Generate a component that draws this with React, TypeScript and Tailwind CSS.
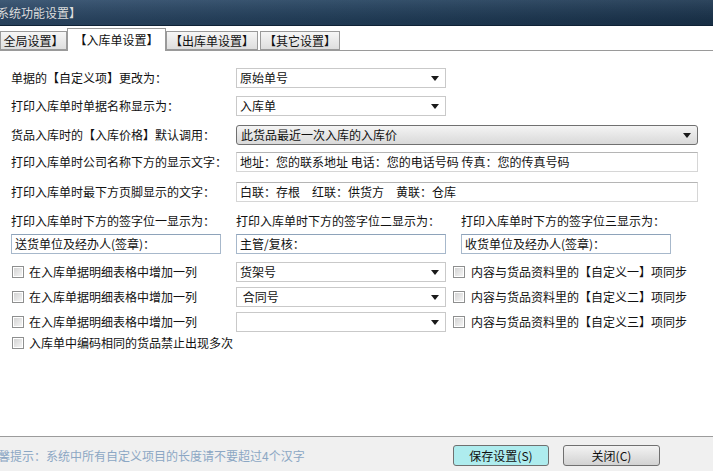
import React from 'react';

const font = { fontFamily: '"Noto Sans CJK SC", "Liberation Sans", sans-serif' };

function Arrow() {
    return (
        <svg width="8" height="5" viewBox="0 0 8 5" className="shrink-0">
            <path d="M0 0 L8 0 L4 5 Z" fill="#1a1a1a" />
        </svg>
    );
}

function Combo({ value, wide }: { value: string; wide?: boolean }) {
    return (
        <div
            className={`h-[20px] ${wide ? 'w-[462px]' : 'w-[210px]'} flex items-center justify-between bg-white border border-[#c9c9c9] pl-[3px] pr-[6px]`}
        >
            <span className="whitespace-pre">{value}</span>
            <Arrow />
        </div>
    );
}

function Field({ value, w = 'w-[462px]', blue }: { value: string; w?: string; blue?: boolean }) {
    return (
        <div
            className={`h-[20px] ${w} flex items-center bg-white border ${
                blue ? 'border-[#a7b8cb] border-t-[#8ea3ba]' : 'border-[#d6d6d6] border-t-[#b5b5b5]'
            } pl-[3px] whitespace-pre`}
        >
            {value}
        </div>
    );
}

function Check() {
    return (
        <div className="w-[12px] h-[12px] shrink-0 border border-[#8e8f8f] bg-white p-px">
            <div className="w-full h-full bg-gradient-to-br from-[#d4d4d4] to-[#f4f4f4]" />
        </div>
    );
}

function Tab({ label, active, w }: { label: string; active?: boolean; w: string }) {
    if (active) {
        return (
            <div
                className={`${w} h-[23px] flex items-center justify-center bg-white border border-b-0 border-[#9a9a9a] -mb-px relative`}
            >
                {label}
            </div>
        );
    }
    return (
        <div
            className={`${w} h-[19px] flex items-center justify-center border border-[#9a9a9a] bg-gradient-to-b from-[#f6f6f6] to-[#dedede]`}
        >
            {label}
        </div>
    );
}

export default function App() {
    const sigLabels = ['打印入库单时下方的签字位一显示为：', '打印入库单时下方的签字位二显示为：', '打印入库单时下方的签字位三显示为：'];
    const extra = [
        { v: '货架号', n: '一' },
        { v: ' 合同号', n: '二' },
        { v: '', n: '三' },
    ];

    return (
        <div className="w-[713px] h-[471px] flex flex-col overflow-hidden bg-white text-[12px] text-[#111] leading-none" style={font}>
            {/* title bar */}
            <div className="h-[26px] shrink-0 flex items-center bg-gradient-to-r from-[#2f4c6b] via-[#24425f] to-[#1c3650] border-b border-[#0f2236]">
                <div className="h-full w-full flex items-center bg-gradient-to-b from-[#ffffff14] to-[#00000026]">
                    <span className="-ml-[3px] text-[12px] text-[#dcdcdc]">系统功能设置】</span>
                </div>
            </div>

            {/* tabs */}
            <div className="h-[25px] shrink-0 flex items-end border-b border-[#9a9a9a] bg-white">
                <Tab label="全局设置】" w="w-[67px]" />
                <Tab label="【入库单设置】" w="w-[99px]" active />
                <Tab label="【出库单设置】" w="w-[92px]" />
                <div className="w-[2px]" />
                <Tab label="【其它设置】" w="w-[80px]" />
            </div>

            {/* content */}
            <div className="flex-1 flex flex-col pl-[11px] pt-[17px]">
                <div className="h-[20px] flex items-center">
                    <span className="w-[225px]">单据的【自定义项】更改为：</span>
                    <Combo value="原始单号" />
                </div>
                <div className="h-[20px] mt-[8px] flex items-center">
                    <span className="w-[225px]">打印入库单时单据名称显示为：</span>
                    <Combo value="入库单" />
                </div>
                <div className="h-[20px] mt-[9px] flex items-center">
                    <span className="w-[225px]">货品入库时的【入库价格】默认调用：</span>
                    <div className="h-[20px] w-[462px] flex items-center justify-between rounded-[3px] border border-[#707070] bg-gradient-to-b from-[#f4f4f4] to-[#d9d9d9] pl-[4px] pr-[6px]">
                        <span>此货品最近一次入库的入库价</span>
                        <Arrow />
                    </div>
                </div>
                <div className="h-[20px] mt-[7px] flex items-center">
                    <span className="w-[225px]">打印入库单时公司名称下方的显示文字：</span>
                    <Field value="地址：您的联系地址 电话：您的电话号码 传真：您的传真号码" />
                </div>
                <div className="h-[21px] mt-[9px] flex items-center">
                    <span className="w-[225px]">打印入库单时最下方页脚显示的文字：</span>
                    <Field value="白联：存根　红联：供货方　黄联：仓库" />
                </div>

                <div className="h-[20px] mt-[9px] flex items-center">
                    {sigLabels.map((l) => (
                        <span key={l} className="w-[225px]">
                            {l}
                        </span>
                    ))}
                </div>
                <div className="h-[20px] mt-[3px] flex items-center gap-[15px]">
                    <Field value="送货单位及经办人(签章)：" w="w-[210px]" blue />
                    <Field value="主管/复核：" w="w-[210px]" blue />
                    <Field value="收货单位及经办人(签章)：" w="w-[210px]" blue />
                </div>

                {extra.map((e, i) => (
                    <div key={e.n} className={`h-[20px] ${i === 0 ? 'mt-[8px]' : 'mt-[5px]'} flex items-center`}>
                        <div className="w-[225px] flex items-center gap-[5px] pl-px">
                            <Check />
                            <span>在入库单据明细表格中增加一列</span>
                        </div>
                        <Combo value={e.v} />
                        <div className="flex items-center gap-[6px] ml-[7px]">
                            <Check />
                            <span>内容与货品资料里的【自定义{e.n}】项同步</span>
                        </div>
                    </div>
                ))}

                <div className="h-[20px] mt-px flex items-center gap-[5px] pl-px">
                    <Check />
                    <span>入库单中编码相同的货品禁止出现多次</span>
                </div>
            </div>

            {/* footer */}
            <div className="h-[35px] shrink-0 flex items-center pt-[3px] border-t border-[#9c9c9c] bg-[#f0f0f0]">
                <span className="-ml-[2px] w-[455px] text-[#8ca7c4]">馨提示：系统中所有自定义项目的长度请不要超过4个汉字</span>
                <button className="w-[96px] h-[21px] flex items-center justify-center rounded-[3px] border border-[#707070] bg-[#aeecee]">
                    保存设置(S)
                </button>
                <button className="ml-[14px] w-[97px] h-[21px] flex items-center justify-center rounded-[3px] border border-[#707070] bg-gradient-to-b from-[#f3f3f3] to-[#d2d2d2]">
                    关闭(C)
                </button>
            </div>
        </div>
    );
}
